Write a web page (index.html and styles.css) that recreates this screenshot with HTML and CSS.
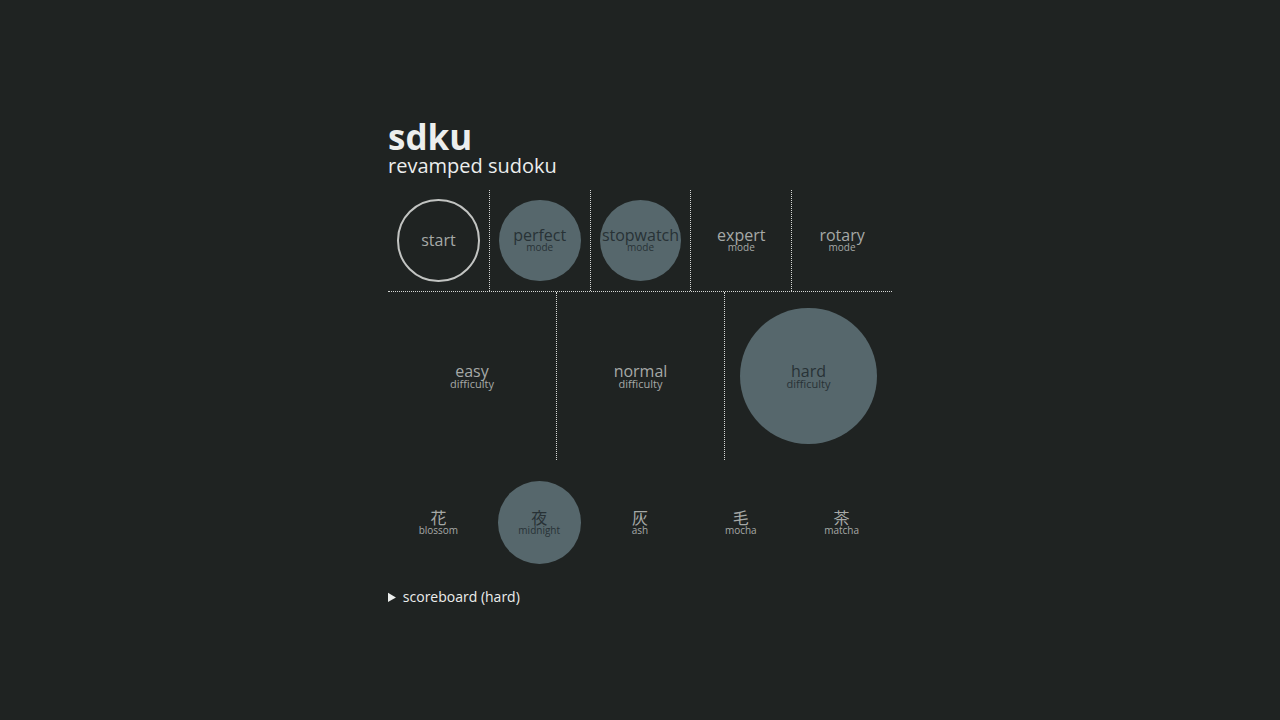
FILE: index.html
```html
<!DOCTYPE html>
<html>
<head>
<meta charset="utf-8">
<link rel="stylesheet" href="styles.css">
</head>
<body>
<main class="app">
  <header class="head">
    <h1 class="title">sdku</h1>
    <p class="subtitle">revamped sudoku</p>
  </header>

  <section class="modes">
    <div class="cell"><button class="dot outline"><span class="main">start</span></button></div>
    <div class="cell"><button class="dot on"><span class="main">perfect</span><span class="sub">mode</span></button></div>
    <div class="cell"><button class="dot on"><span class="main">stopwatch</span><span class="sub">mode</span></button></div>
    <div class="cell"><button class="dot"><span class="main">expert</span><span class="sub">mode</span></button></div>
    <div class="cell"><button class="dot"><span class="main">rotary</span><span class="sub">mode</span></button></div>
  </section>

  <section class="levels">
    <div class="cell"><button class="dot"><span class="main">easy</span><span class="sub2">difficulty</span></button></div>
    <div class="cell"><button class="dot"><span class="main">normal</span><span class="sub2">difficulty</span></button></div>
    <div class="cell"><button class="dot on"><span class="main">hard</span><span class="sub2">difficulty</span></button></div>
  </section>

  <section class="themes">
    <div class="cell"><button class="dot"><span class="kanji">花</span><span class="sub">blossom</span></button></div>
    <div class="cell"><button class="dot on"><span class="kanji">夜</span><span class="sub">midnight</span></button></div>
    <div class="cell"><button class="dot"><span class="kanji">灰</span><span class="sub">ash</span></button></div>
    <div class="cell"><button class="dot"><span class="kanji">毛</span><span class="sub">mocha</span></button></div>
    <div class="cell"><button class="dot"><span class="kanji">茶</span><span class="sub">matcha</span></button></div>
  </section>

  <details class="score">
    <summary>scoreboard (hard)</summary>
  </details>
</main>
</body>
</html>
```

FILE: styles.css
```css
html, body {
  margin: 0;
  padding: 0;
  background: #1f2322;
  height: 100%;
}
body {
  font-family: "Open Sans", "Noto Sans CJK JP", sans-serif;
  color: #a6a9a7;
}
.app {
  width: 504px;
  margin: 0 auto;
  padding-top: 119px;
}
.head {
  margin-bottom: 13px;
}
.title {
  margin: 0;
  font-size: 35px;
  line-height: 36px;
  font-weight: 700;
  color: #eceeed;
}
.subtitle {
  margin: 0;
  font-size: 20px;
  line-height: 22px;
  color: #eceeed;
}
.modes {
  display: grid;
  grid-template-columns: repeat(5, 1fr);
  height: 101px;
  border-bottom: 1px dotted #d6d8d6;
}
.modes .cell + .cell {
  border-left: 1px dotted #d6d8d6;
}
.levels {
  display: grid;
  grid-template-columns: repeat(3, 1fr);
  height: 168px;
}
.levels .cell + .cell {
  border-left: 1px dotted #d6d8d6;
}
.themes {
  display: grid;
  grid-template-columns: repeat(5, 1fr);
  height: 101px;
  margin-top: 12px;
}
.cell {
  display: flex;
  align-items: center;
  justify-content: center;
}
.dot {
  width: 82%;
  aspect-ratio: 1;
  border-radius: 50%;
  border: 2px solid transparent;
  background: transparent;
  color: #a6a9a7;
  font-family: inherit;
  padding: 0;
  display: flex;
  flex-direction: column;
  align-items: center;
  justify-content: center;
  cursor: pointer;
}
.dot.on {
  background: #56676c;
  color: #283236;
}
.dot.outline {
  border-color: #c2c4c2;
}
.main {
  font-size: 16px;
  line-height: 14px;
}
.sub {
  font-size: 10px;
  line-height: 11px;
}
.sub2 {
  font-size: 11px;
  line-height: 11px;
}
.kanji {
  font-family: "Noto Sans CJK JP", sans-serif;
  font-size: 16px;
  line-height: 16px;
}
.score {
  margin-top: 14px;
  font-size: 14px;
  color: #eceeed;
}
.score summary {
  cursor: pointer;
}
```
